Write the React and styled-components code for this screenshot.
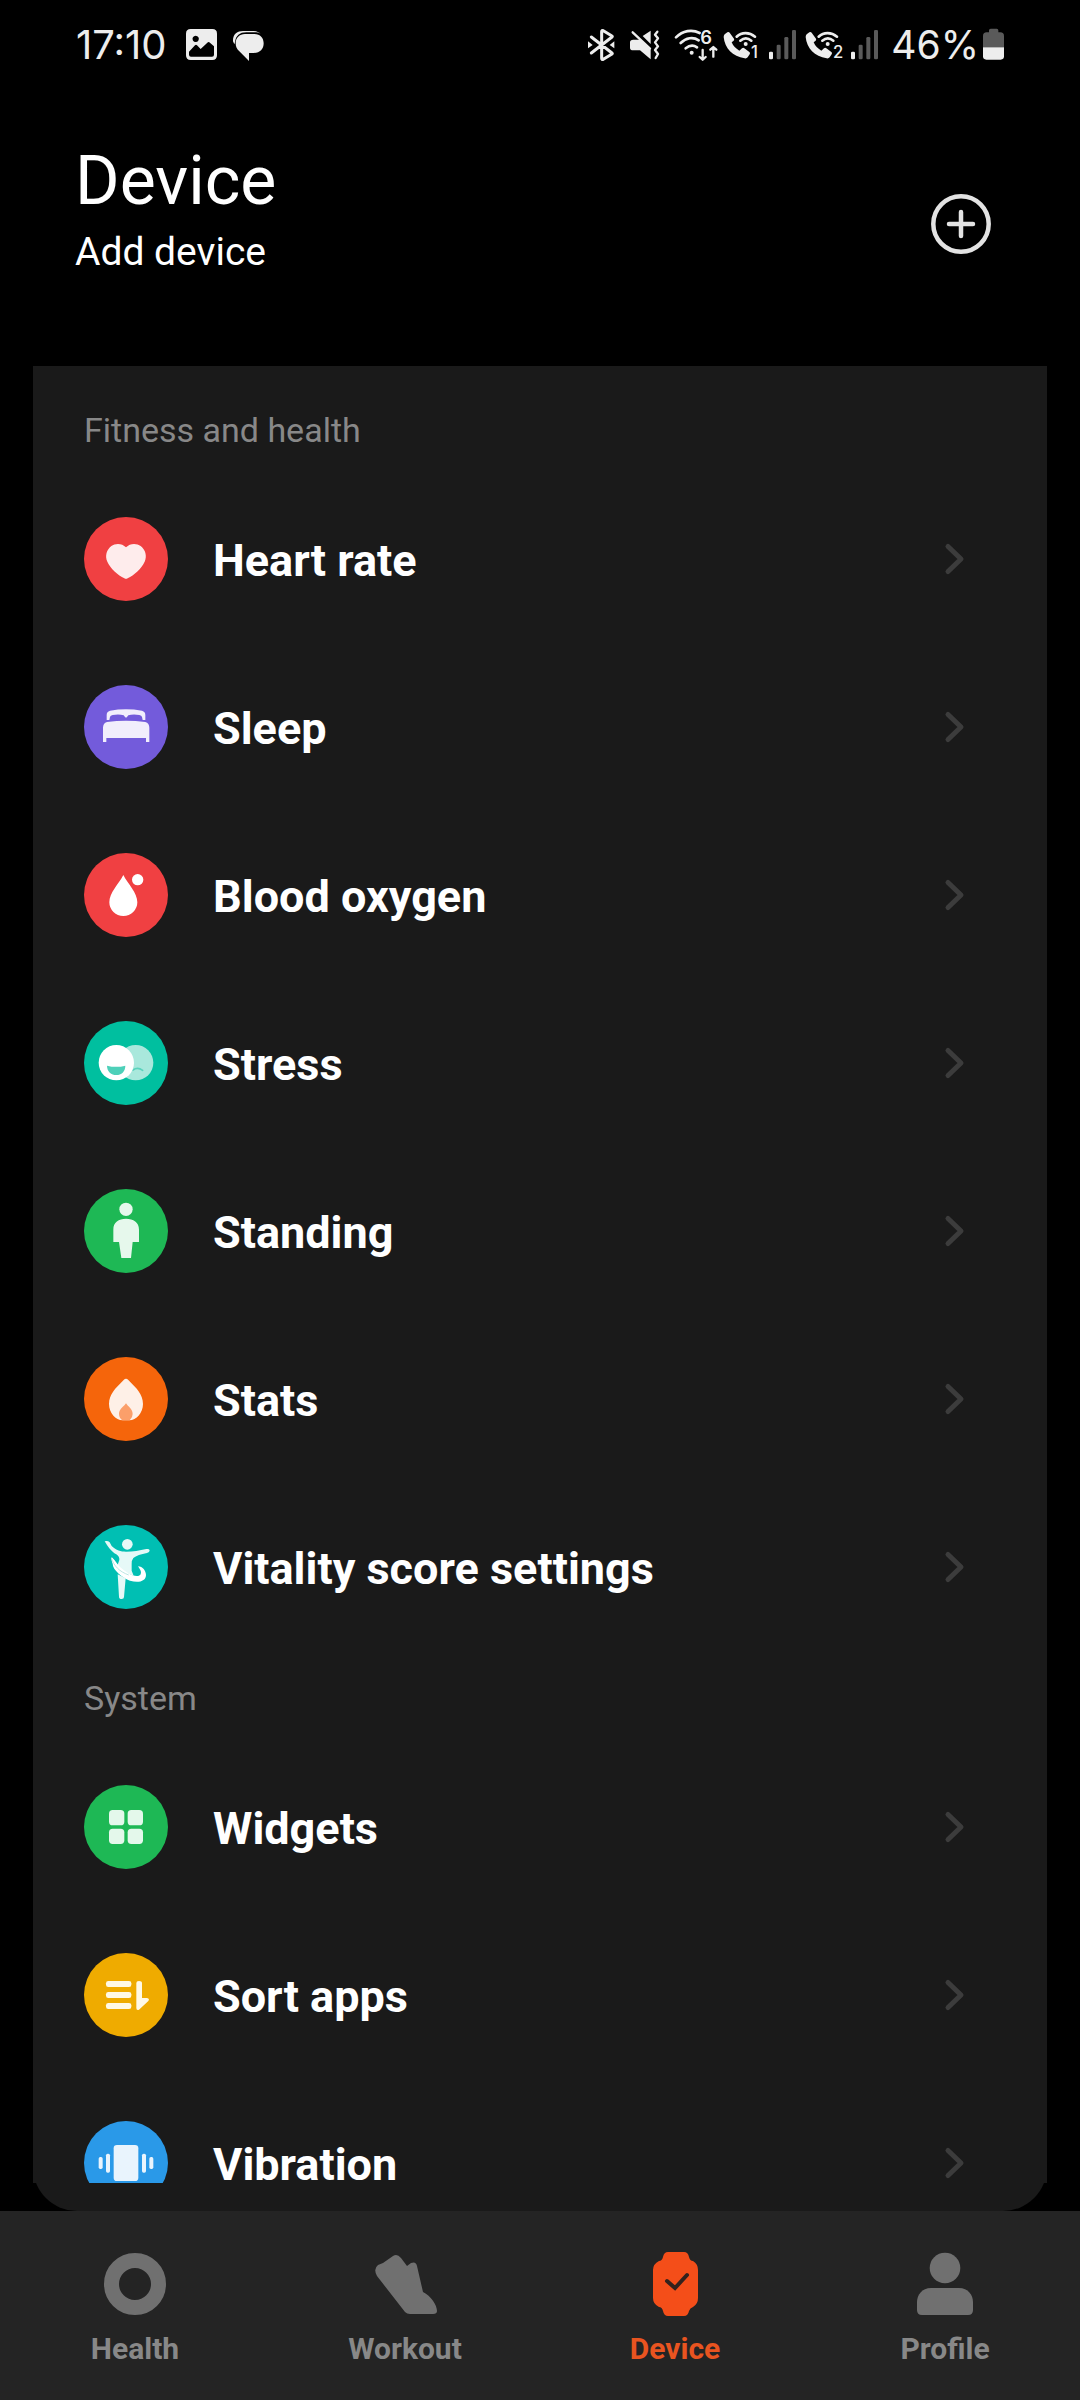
import React from 'react';
import styled, { createGlobalStyle } from 'styled-components';

const GlobalStyle = createGlobalStyle`
  * { box-sizing: border-box; }
  body {
    margin: 0;
    background: #000;
    color: #fff;
    font-family: Roboto, "Liberation Sans", sans-serif;
  }
`;

const Screen = styled.div`
  display: flex;
  flex-direction: column;
  height: 100vh;
  background: #000;
`;

/* ---------- status bar ---------- */

const StatusBar = styled.div`
  display: flex;
  flex: none;
  align-items: center;
  justify-content: space-between;
  height: 90px;
  padding: 0 76px;
  color: #ededed;
  font-family: Inter, "Liberation Sans", sans-serif;
  font-size: 39px;
  line-height: 48px;
`;

const StatusGroup = styled.div`
  display: flex;
  align-items: center;
  gap: ${(p) => p.$gap}px;
`;

const Clock = styled.span`
  font-size: 40px;
`;

const StatusSvg = styled.svg`
  display: block;
  flex: none;
  height: 34px;
  width: ${(p) => p.$width}px;
  fill: #ededed;
  overflow: visible;
`;

const PictureIcon = () => (
  <StatusSvg $width={32} viewBox="402 84 96 102" aria-hidden="true">
    <path
      fillRule="evenodd"
      d="M419 87h65q14 0 14 14v65q0 14-14 14h-65q-14 0-14-14v-65q0-14 14-14z M434 107a9.500 9.500 0 1 0 .1 0z M414 155v9q0 6 6 6h63q6 0 6-6v-25l-14-12q-3-2-6 1l-20 19-11-11q-3-3-6 0z"
    />
  </StatusSvg>
);

const ChatIcon = () => (
  <StatusSvg $width={33} viewBox="543 84 99 102" aria-hidden="true">
    <path d="M546 124c-1-22 13-31 30-31h27c12 0 20 3 26 8-6-3-12-4-18-4h-25c-20 0-32 10-34 30l-2 6z" />
    <path d="M582 102h28c18 0 28 12 28 28 0 17-11 29-29 29h-15v24l-29-29c-8-7-11-15-11-24 0-16 11-28 28-28z" />
  </StatusSvg>
);

const BluetoothIcon = () => (
  <StatusSvg $width={38} viewBox="42 84 114 102" aria-hidden="true">
    <path
      d="M64 111l62 48q2 1 0 3l-26 16q-5 2-5-3V95q0-5 5-3l26 16q2 1 0 3l-62 48"
      fill="none"
      stroke="#ededed"
      strokeWidth="9"
      strokeLinecap="round"
      strokeLinejoin="round"
    />
    <path d="M54 124l14 11-14 10z M133 124l-14 11 14 10z" />
  </StatusSvg>
);

const MuteVibrateIcon = () => (
  <StatusSvg $width={36} viewBox="168 84 108 102" aria-hidden="true">
    <path d="M190 119h21l31 30v29l-32-27h-20q-10 0-10-8v-16q0-8 10-8z M218 108l24-16v40z" />
    <path
      d="M188 97l52 49M262 95l-7 9 9 11-9 12 9 12-9 11 9 12-7 12"
      fill="none"
      stroke="#ededed"
      strokeWidth="7"
      strokeLinecap="round"
      strokeLinejoin="round"
    />
  </StatusSvg>
);

const WifiIcon = () => (
  <StatusSvg $width={53} viewBox="288 84 159 102" aria-hidden="true">
    <g fill="none" stroke="#ededed" strokeWidth="8" strokeLinecap="round" strokeLinejoin="round">
      <path d="M318 112c20-20 48-25 71-13M332 129c16-16 38-19 54-8M347 145c11-9 24-10 34-3" />
      <path d="M398 150v28M389 171l9 8 9-8M430 170v-27M421 149l9-8 9 8" strokeWidth="7" />
    </g>
    <circle cx="365" cy="158" r="6" />
    <text x="391" y="131" fontSize="55" fontWeight="600">6</text>
  </StatusSvg>
);

const WifiCallIcon = ({ line }) => (
  <StatusSvg $width={39} viewBox="459 84 117 102" aria-hidden="true">
    <path d="M464 103l8-6q4-3 7 1l13 18q2 4-2 7l-5 4q6 15 23 25l8-7q4-3 7 0l15 11q4 3 1 7l-6 9q-3 4-9 3c-36-6-60-30-63-64q0-5 3-8z" />
    <path
      d="M500 110c15-14 38-14 55 0M511 122c10-8 23-8 33 0"
      fill="none"
      stroke="#ededed"
      strokeWidth="8"
      strokeLinecap="round"
    />
    <circle cx="527" cy="132" r="6" />
    <text x="543" y="175" fontSize="50" fontWeight="500">{line}</text>
  </StatusSvg>
);

const SignalIcon = () => (
  <StatusSvg $width={33} viewBox="588 84 99 102" aria-hidden="true">
    <rect x="597" y="155" width="12" height="23" rx="4" />
    <g fill="#5a5a5a">
      <rect x="620" y="134" width="12" height="44" rx="4" />
      <rect x="643" y="111" width="12" height="67" rx="4" />
      <rect x="666" y="90" width="12" height="88" rx="4" />
    </g>
  </StatusSvg>
);

const BatteryIcon = () => (
  <StatusSvg $width={21} viewBox="1239 84 63 102" aria-hidden="true">
    <path fill="#5a5a5a" d="M1257 97v-6q0-5 5-5h18q5 0 5 5v6h6q11 0 11 11v34h-63v-34q0-11 11-11z" />
    <path d="M1239 142h63v27q0 10-10 10h-43q-10 0-10-10z" />
  </StatusSvg>
);

/* ---------- header ---------- */

const Header = styled.header`
  display: flex;
  flex: none;
  align-items: center;
  justify-content: space-between;
  padding: 51px 87px 59px 75px;
`;

const Heading = styled.div`
  padding-bottom: 24px;
`;

const Title = styled.h1`
  margin: 0;
  font-size: 68px;
  font-weight: 400;
  line-height: 80px;
`;

const Subtitle = styled.p`
  margin: 0;
  font-size: 39px;
  line-height: 62px;
`;

const AddButton = styled.button`
  display: block;
  width: 64px;
  height: 64px;
  padding: 0;
  border: 0;
  background: none;
  color: #e3e3e3;
`;

/* ---------- settings list ---------- */

const Panel = styled.main`
  display: flex;
  flex: 1;
  flex-direction: column;
  min-height: 0;
  margin: 0 33px;
  padding-bottom: 28px;
  border-radius: 0 0 44px 44px;
  background: #1a1a1a;
`;

const Scroller = styled.div`
  flex: 1;
  min-height: 0;
  padding-top: 17px;
  overflow-y: auto;
  scrollbar-width: none;
  background: #1a1a1a;
`;

const SectionTitle = styled.h2`
  margin: 0;
  padding: 2px 51px 0;
  color: #888;
  font-size: 34px;
  font-weight: 400;
  line-height: 90px;
`;

const Rows = styled.ul`
  margin: 0;
  padding: 0;
  list-style: none;
`;

const Row = styled.button`
  display: flex;
  align-items: center;
  gap: 45px;
  width: 100%;
  height: 168px;
  padding: 0 80px 0 51px;
  border: 0;
  background: none;
  color: #fff;
  font-family: inherit;
  text-align: left;
`;

const RowIcon = styled.svg`
  flex: none;
  width: 84px;
  height: 84px;
  border-radius: 50%;
  background: ${(p) => p.$color};
`;

const RowLabel = styled.span`
  flex: 1;
  padding-top: 4px;
  font-size: 45px;
  font-weight: 700;
  line-height: 48px;
`;

const Chevron = styled.svg`
  flex: none;
  width: 24px;
  height: 36px;
`;

/* ---------- bottom navigation ---------- */

const Nav = styled.nav`
  display: grid;
  flex: none;
  grid-template-columns: repeat(4, 1fr);
  padding: 41px 0 31px;
  background: #242424;
`;

const NavLink = styled.a`
  display: flex;
  flex-direction: column;
  align-items: center;
  gap: 13px;
  color: ${(p) => (p.$active ? '#e95420' : '#888')};
  font-size: 30px;
  font-weight: 700;
  line-height: 40px;
  text-decoration: none;
`;

const NavIcon = styled.svg`
  display: block;
  width: 64px;
  height: 64px;
  fill: #707070;
`;

/* ---------- data ---------- */

const fitness = [
  {
    label: 'Heart rate',
    color: '#f04042',
    icon: (
      <path
        fill="#feecec"
        d="M126 91C138 78 158 78 170 87C184 98 190 117 182 134C173 155 150 174 131 184Q126 187 121 184C102 174 79 155 70 134C62 117 68 98 82 87C94 78 114 78 126 91Z"
      />
    ),
  },
  {
    label: 'Sleep',
    color: '#735bdb',
    icon: (
      <g fill="#f1eefc">
        <path d="M68 105V90q0-10 10-13 48-8 96 0 10 3 10 13v15h-8l-2-9q-1-5-8-6-20-3-33 1l-4 5q-3 3-6 0l-4-5q-13-4-33-1-7 1-8 6l-2 9z" />
        <path d="M57 171v-43q0-13 12-17 57-8 115 0 12 4 12 17v43h-10v-12H67v12z" />
      </g>
    ),
  },
  {
    label: 'Blood oxygen',
    color: '#f04042',
    icon: (
      <g fill="#fff">
        <path d="M118 66C132 94 160 118 160 148a42 41 0 0 1-84 0C76 118 104 94 118 66z" />
        <circle cx="161" cy="80" r="17" />
      </g>
    ),
  },
  {
    label: 'Stress',
    color: '#00bf9f',
    icon: (
      <g>
        <circle cx="155" cy="125" r="53" fill="#a9e8dc" />
        <path d="M147 147q14-10 29 1" fill="none" stroke="#5bd3bd" strokeWidth="5" strokeLinecap="round" />
        <circle cx="97" cy="125" r="53" fill="#fff" />
        <path d="M69 134q28 7 55 0c0 18-12 28-27 28s-28-10-28-28z" fill="#4dd0b9" />
      </g>
    ),
  },
  {
    label: 'Standing',
    color: '#1eb855',
    icon: (
      <g fill="#e6f8ec">
        <circle cx="126" cy="61" r="20" />
        <path d="M88 159v-37c0-23 16-33 38-33s39 10 39 33v37h-19l-5 48h-29l-7-48z" />
      </g>
    ),
  },
  {
    label: 'Stats',
    color: '#f5650b',
    icon: (
      <g>
        <path d="M119 69Q126 61 133 69C150 87 177 108 177 141c0 27-20 49-41 49h-20c-21 0-41-22-41-49C75 108 102 87 119 69z" fill="#fef0e7" />
        <path d="M126 139c5 9 20 16 20 32q0 11-9 19h-22q-10-8-10-19c0-16 16-23 21-32z" fill="#fb9f6a" />
      </g>
    ),
  },
  {
    label: 'Vitality score settings',
    color: '#00bfb3',
    icon: (
      <g fill="#e6f9f7">
        <circle cx="130" cy="58" r="16" />
        <path d="M62 49q9-3 15 3l6 11c14 14 27 17 43 17 22 0 40-3 61-8q9-1 10 4 0 6-8 8c-18 4-33 8-41 15q-5 6-5 18v20l6 15-47-18-2-12 6-17q1-10-9-17C81 80 72 65 62 49z" />
        <path d="M83 96l9 10c9 15 23 28 40 38 15 9 31 12 37 5 5-7 0-15-7-25 14 0 24 14 24 26 0 19-23 25-48 17-23-9-52-32-52-51-3-7-4-14-3-20z" fill="#fff" />
        <path d="M82 99c8 24 23 40 52 51" fill="none" stroke="#b9e6e2" strokeWidth="3" />
        <path d="M101 148l24 12-5 56q0 6-7 6-8 0-8-7z" />
      </g>
    ),
  },
];

const system = [
  {
    label: 'Widgets',
    color: '#1eb855',
    icon: (
      <g fill="#e4f8eb">
        <rect x="75" y="75" width="46" height="46" rx="11" />
        <rect x="131" y="75" width="46" height="46" rx="11" />
        <rect x="75" y="131" width="46" height="46" rx="11" />
        <rect x="131" y="131" width="46" height="46" rx="11" />
      </g>
    ),
  },
  {
    label: 'Sort apps',
    color: '#efab00',
    icon: (
      <g fill="#fff9e6">
        <rect x="66" y="84" width="76" height="18" rx="7" />
        <rect x="66" y="117" width="76" height="18" rx="7" />
        <rect x="66" y="150" width="76" height="18" rx="7" />
        <path d="M157 90q0-6 8-6 9 0 9 6v45h15q9 2 4 9l-28 26q-8 3-8-5z" />
      </g>
    ),
  },
  {
    label: 'Vibration',
    color: '#2a99e8',
    icon: (
      <g fill="#e9f4fd">
        <rect x="89" y="72" width="74" height="108" rx="10" />
        <rect x="66" y="98" width="12" height="57" rx="5" />
        <rect x="44" y="108" width="12" height="36" rx="5" />
        <rect x="174" y="98" width="12" height="57" rx="5" />
        <rect x="196" y="108" width="12" height="36" rx="5" />
      </g>
    ),
  },
];

const tabs = [
  {
    label: 'Health',
    icon: <circle cx="32" cy="32" r="23.5" fill="none" stroke="#707070" strokeWidth="15" />,
  },
  {
    label: 'Workout',
    icon: (
      <path d="M4 24Q0 17 5 13l5-2L20 4q4-3 8 2l6 8 4-3q5-2 6 3l6 26c8 4 14 13 14 19q0 3-4 3H37q-3 0-5-2z" />
    ),
  },
  {
    label: 'Device',
    active: true,
    icon: (
      <g>
        <path
          fill="#f44e19"
          d="M25 0h16q4 0 5 5 1 4 4 4 5 3 5 9v28q0 6-5 9-3 1-4 4-1 5-5 5H25q-4 0-5-5-1-4-4-4-6-3-6-9V18q0-6 6-9 3 0 4-4 1-5 5-5z"
        />
        <path d="M24 29l8 7 12-13" fill="none" stroke="#33221d" strokeWidth="4" strokeLinecap="round" />
      </g>
    ),
  },
  {
    label: 'Profile',
    icon: (
      <g>
        <circle cx="32" cy="16" r="15.3" />
        <path d="M18 36h28c9 0 14 7 14 14v8q0 5-5 5H9q-5 0-5-5v-8c0-7 5-14 14-14z" />
      </g>
    ),
  },
];

function Section({ title, items }) {
  return (
    <section>
      <SectionTitle>{title}</SectionTitle>
      <Rows>
        {items.map((item) => (
          <li key={item.label}>
            <Row type="button">
              <RowIcon $color={item.color} viewBox="0 0 252 252" aria-hidden="true">
                {item.icon}
              </RowIcon>
              <RowLabel>{item.label}</RowLabel>
              <Chevron viewBox="0 0 24 36" aria-hidden="true">
                <path
                  d="M5 5.500l13 12.500-13 12.500"
                  fill="none"
                  stroke="#3c3c3c"
                  strokeWidth="5"
                  strokeLinecap="round"
                  strokeLinejoin="round"
                />
              </Chevron>
            </Row>
          </li>
        ))}
      </Rows>
    </section>
  );
}

export default function App() {
  return (
    <Screen>
      <GlobalStyle />
      <StatusBar>
        <StatusGroup $gap={18}>
          <Clock>17:10</Clock>
          <StatusGroup $gap={15}>
            <PictureIcon />
            <ChatIcon />
          </StatusGroup>
        </StatusGroup>
        <StatusGroup $gap={10}>
          <StatusGroup $gap={4}>
            <BluetoothIcon />
            <MuteVibrateIcon />
            <WifiIcon />
            <StatusGroup $gap={6}>
              <StatusGroup $gap={4}>
                <WifiCallIcon line="1" />
                <SignalIcon />
              </StatusGroup>
              <StatusGroup $gap={4}>
                <WifiCallIcon line="2" />
                <SignalIcon />
              </StatusGroup>
            </StatusGroup>
          </StatusGroup>
          <StatusGroup $gap={4}>
            <span>46%</span>
            <BatteryIcon />
          </StatusGroup>
        </StatusGroup>
      </StatusBar>

      <Header>
        <Heading>
          <Title>Device</Title>
          <Subtitle>Add device</Subtitle>
        </Heading>
        <AddButton type="button" aria-label="Add device">
          <svg width="64" height="64" viewBox="0 0 64 64" fill="none" stroke="currentColor" aria-hidden="true">
            <circle cx="32" cy="32" r="27.7" strokeWidth="4.500" />
            <path d="M32 20v24M20 32h24" strokeWidth="4.500" strokeLinecap="round" />
          </svg>
        </AddButton>
      </Header>

      <Panel>
        <Scroller>
          <Section title="Fitness and health" items={fitness} />
          <Section title="System" items={system} />
        </Scroller>
      </Panel>

      <Nav>
        {tabs.map((tab) => (
          <NavLink key={tab.label} href={'#' + tab.label.toLowerCase()} $active={tab.active}>
            <NavIcon viewBox="0 0 64 64" aria-hidden="true">
              {tab.icon}
            </NavIcon>
            {tab.label}
          </NavLink>
        ))}
      </Nav>
    </Screen>
  );
}
